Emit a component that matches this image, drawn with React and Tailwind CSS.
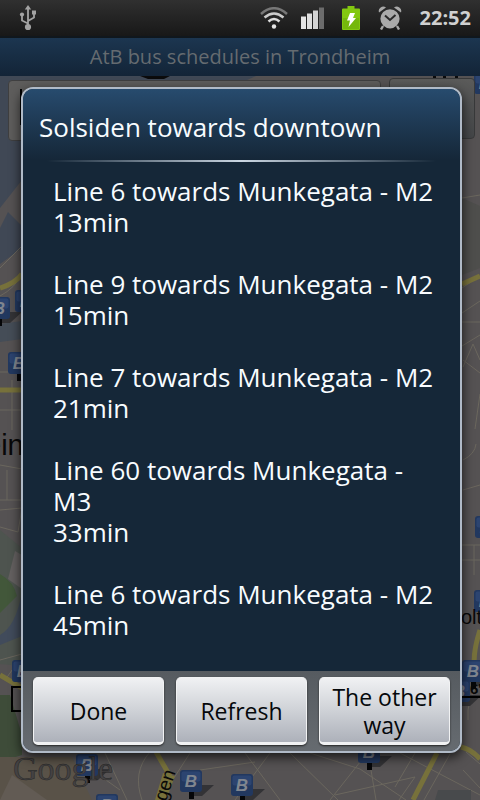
import React from "react";

const departures = [
  { line: "Line 6 towards Munkegata - M2", wait: "13min" },
  { line: "Line 9 towards Munkegata - M2", wait: "15min" },
  { line: "Line 7 towards Munkegata - M2", wait: "21min" },
  { line: "Line 60 towards Munkegata - M3", wait: "33min" },
  { line: "Line 6 towards Munkegata - M2", wait: "45min" },
];

function UsbIcon() {
  return (
    <svg className="h-[26px] w-[18px]" viewBox="0 0 18 26" fill="none" stroke="#a3a3a3" strokeWidth="1.8">
      <path d="M9 22V4M9 18.500L3 15.500V10M9 16L15 12.500V8" />
      <path d="M9 0l3.200 4.500H5.800z" fill="#a3a3a3" stroke="none" />
      <circle cx="9" cy="22" r="3.100" fill="#a3a3a3" stroke="none" />
      <circle cx="3" cy="9.500" r="2.100" fill="#a3a3a3" stroke="none" />
      <path d="M13 5.500h4v4h-4z" fill="#a3a3a3" stroke="none" />
    </svg>
  );
}

function WifiIcon() {
  return (
    <svg className="h-[22px] w-[28px]" viewBox="0 0 28 22" fill="none" strokeWidth="2.500">
      <path d="M1 7Q14-4.500 27 7" stroke="#777" />
      <path d="M4.500 10.500Q14 2.500 23.500 10.500" stroke="#ccc" />
      <path d="M8.500 14.500Q14 9.500 19.500 14.500" stroke="#ddd" />
      <circle cx="14" cy="19.500" r="2.200" fill="#e5e5e5" />
    </svg>
  );
}

function SignalIcon() {
  return (
    <svg className="h-[22px] w-[24px]" viewBox="0 0 24 22">
      <path d="M0 9.500h5V22H0z" fill="#e4e4e4" />
      <path d="M6 6.500h5V22H6z" fill="#dedede" />
      <path d="M12 3.500h5V22h-5z" fill="#d4d4d4" />
      <path d="M18 .5h5V22h-5z" fill="#6c6c6c" />
    </svg>
  );
}

function BatteryIcon() {
  return (
    <svg className="h-[24px] w-[18px]" viewBox="0 0 18 24">
      <path d="M5.500 0h7v2.500H17a1 1 0 0 1 1 1V23a1 1 0 0 1-1 1H1a1 1 0 0 1-1-1V3.500a1 1 0 0 1 1-1h4.500z" fill="#83c811" />
      <path d="M1 12h16v11H1z" fill="#75b80c" />
      <path d="M8 7h5l-2 5h3L6.500 21l1.500-6.500H5z" fill="#fff" />
    </svg>
  );
}

function AlarmIcon() {
  return (
    <svg className="h-[24px] w-[24px]" viewBox="0 0 24 24">
      <path d="M5 20l-2 3.500M19 20l2 3.500" stroke="#a8a8a8" strokeWidth="2.400" />
      <path d="M1 6.500A4.500 4.500 0 0 1 8 1.500zM23 6.500A4.500 4.500 0 0 0 16 1.500z" fill="#a8a8a8" />
      <circle cx="12" cy="12.800" r="9.600" fill="#aaa" />
      <path d="M7 9.500l5 4.500 5.500-5" fill="none" stroke="#292929" strokeWidth="2" />
    </svg>
  );
}

function Stop({ x, y }) {
  return (
    <g transform={`translate(${x} ${y})`}>
      <path d="M12 15h22l-12 11H12z" fill="#333336" />
      <path d="M9 21h5v8H9z" fill="#050608" />
      <rect width="22" height="22" rx="3" fill="#22385f" />
      <rect x="1.500" y="1.500" width="19" height="10" rx="2" fill="#2c4470" />
      <text x="11" y="17" textAnchor="middle" fontSize="17" fontWeight="bold" fontStyle="italic" fill="#80868f" fontFamily="Liberation Sans, sans-serif">B</text>
    </g>
  );
}

function CityMap() {
  return (
    <svg className="absolute inset-0 h-full w-full" viewBox="0 76 480 724" preserveAspectRatio="xMidYMid slice" aria-hidden="true">
      <path d="M0 76h480v724H0z" fill="#555253" />
      <path d="M0 76h256l-234 104L0 208z" fill="#404855" />
      <path d="M0 228l8-16 14 14v22l-22 16z" fill="#404855" />
      <path d="M0 324l22-3v18l-22 3z" fill="#454d57" />
      <path d="M0 530l22 18v118l-22-2z" fill="#4e544f" />
      <path d="M0 574q14 8 17 22L0 613z" fill="#42573a" />
      <path d="M22 592q-6 34-22 43v10l22-9z" fill="#414b5b" />
      <path d="M0 695l10 0 12 40v20L0 762z" fill="#3e4c39" />
      <path d="M0 757h72l20 43H0z" fill="#595248" />
      <path d="M15 551l7 4v34l-14-10z" fill="#646060" />
      <path d="M12 775l35 25H0z" fill="#625b54" />
      <path d="M462 198l18 8v62l-18 7z" fill="#4e4e4c" />
      <g fill="none" stroke="#6b675e">
        <path d="M0 268l22-22M0 296q15-8 22-22M0 372h22M0 410h22M12 380v50M0 465l22 4M0 500h22M7 470v30M0 510l22-2-4 24-18-5M0 660l22-6M5 680l10-14" />
        <path d="M462 198l18-3M462 288l18-12M462 313l18-12M462 322h18M462 346l18-11M463 367l10-23 7 16M463 360l17 13M475 429l5-35M463 460q12-6 13-16M463 490l17-5M462 545h18M462 560h18M474 545v30M480 680q-14 20-12 40M466 752l14 12" />
        <path d="M105 753l22 47M150 752q-18 20-8 48M190 753l-16 25M245 753l35 47M270 753l-35 47M290 753l48 47M310 753l50 16 46 31M330 800l38-48 8 48M335 795l80-18-16 23M415 753l-20 34M450 754l-26 46M200 770l55-8M92 770l28 20M463 770l17 18M400 753l80 42" />
      </g>
      <g fill="none" stroke="#77713b" strokeWidth="5">
        <path d="M0 288q16-5 22-14M0 390h22M0 675l22 13M156 752l14 24M437 753l-24 47M461 747q10 2 19 12M480 630q-8 25-5 38M462 284l18-8" />
      </g>
      <path d="M163 773l12 3-9 24h-11z" fill="#77713b" />
      <path d="M140 76h30l-6 3h-16zM433 76h3v3h-3zM443 76h3v3h-3zM455 76h3v3h-3z" fill="#0b0b0c" />
      <Stop x={474} y={72} />
      <Stop x={-12} y={297} />
      <Stop x={15} y={290} />
      <Stop x={8} y={352} />
      <Stop x={475} y={516} />
      <Stop x={474} y={590} />
      <Stop x={462} y={660} />
      <Stop x={448} y={680} />
      <Stop x={12} y={660} />
      <Stop x={76} y={754} />
      <Stop x={180} y={770} />
      <Stop x={231} y={774} />
      <Stop x={96} y={794} />
      <Stop x={358} y={741} />
      <path d="M438 790h33v10h-36z" fill="#484a4c" />
      <path d="M30 687H12v24h18" fill="none" stroke="#000" strokeWidth="2" />
      <path d="M462 697h18" stroke="#000" strokeWidth="2" />
      <g fontFamily="Liberation Sans, sans-serif" fill="#080808">
        <text x="-15" y="455" fontSize="29">ein</text>
        <text x="461" y="624" fontSize="20">olt</text>
        <text x="470" y="694" fontSize="15" fontWeight="bold">6'</text>
        <text transform="translate(166 802) rotate(-72)" fontSize="19">gen</text>
      </g>
      <text x="13" y="780" fontSize="34" fill="#444243" stroke="#252525" strokeWidth=".5" fontFamily="Liberation Serif, serif">Google</text>
    </svg>
  );
}

function DialogButton({ children }) {
  return (
    <button type="button" className="h-[68px] min-w-0 flex-1 rounded-[5px] border border-b-[3px] border-[#f1f2f3] bg-linear-to-b from-[#f0f1f3] via-[#cfd2d7] to-[#adb1ba] px-1 pt-[2px] text-[23px] leading-7 text-[#05080b] shadow-[0_1px_2px_#222]">
      {children}
    </button>
  );
}

export default function App() {
  return (
    <div className="relative flex min-h-screen flex-col overflow-hidden bg-black font-['Open_Sans','Noto_Sans',sans-serif]">
      <header className="flex h-[38px] items-center justify-between border-b-2 border-[#10171d] bg-linear-to-b from-[#303030] to-[#181818] pr-[9px] pl-[19px]">
        <UsbIcon />
        <div className="flex items-center">
          <WifiIcon />
          <span className="w-[13px]" />
          <SignalIcon />
          <span className="w-[17px]" />
          <BatteryIcon />
          <span className="w-[18px]" />
          <AlarmIcon />
          <time className="ml-[18px] text-xl font-bold text-[#d0d0d0]">22:52</time>
        </div>
      </header>
      <div className="flex h-[38px] items-center justify-center bg-linear-to-b from-[#1c3650] to-[#132437]">
        <h1 className="text-xl text-[#656b70]">AtB bus schedules in Trondheim</h1>
      </div>

      <main className="relative flex-1">
        <CityMap />
        <div className="relative flex gap-2 pt-[2px] pr-[5px] pl-2">
          <input aria-label="Search" className="mt-[2px] h-[61px] min-w-0 flex-1 rounded border border-[#3f3f40] bg-[#5e5d5c] px-3" />
          <div className="w-[86px]">
            <button type="button" aria-label="Go" className="h-[61px] w-full rounded border border-[#38393a] bg-linear-to-b from-[#5b5b5a] to-[#444648]" />
          </div>
          <span className="absolute top-[13px] left-5 h-9 w-[2px] bg-black" />
        </div>
      </main>

      <div className="absolute inset-x-0 top-[39px] bottom-0 flex items-center pr-[18px] pl-[21px]">
        <section role="dialog" aria-labelledby="stop-name" className="w-full overflow-hidden rounded-xl border-2 border-[#b0bac7] bg-[#152738] text-[#f8fcff] shadow-[0_4px_12px_#000b]">
          <div className="bg-linear-to-b from-[#274b6e] to-[#152738] px-4">
            <h2 id="stop-name" className="pt-[18px] pb-[13px] text-[26px] leading-10">Solsiden towards downtown</h2>
          </div>
          <div className="mx-6 h-[2px] bg-linear-to-r from-transparent via-[#cbd7e3] to-transparent" />
          <ul className="flex flex-col gap-[31px] pt-[14px] pr-5 pb-[30px] pl-[30px] text-[26px] leading-[31px]">
            {departures.map((d) => (
              <li key={d.line + d.wait}>
                <p>{d.line}</p>
                <p>{d.wait}</p>
              </li>
            ))}
          </ul>
          <div className="flex gap-3 bg-linear-to-b from-[#565b60] to-[#666b70] px-[10px] py-[6px]">
            <DialogButton>Done</DialogButton>
            <DialogButton>Refresh</DialogButton>
            <DialogButton>The other way</DialogButton>
          </div>
        </section>
      </div>
    </div>
  );
}
